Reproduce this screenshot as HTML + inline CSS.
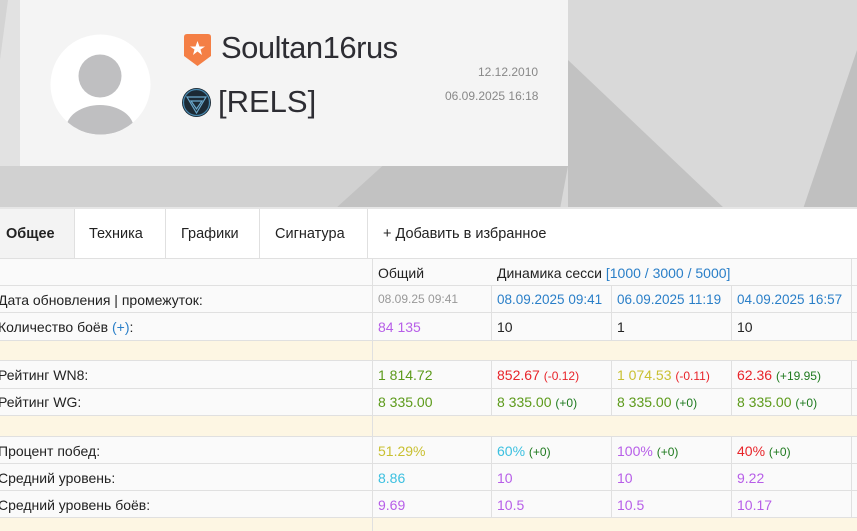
<!DOCTYPE html>
<html><head><meta charset="utf-8"><style>
*{margin:0;padding:0;box-sizing:border-box}
body{width:857px;height:531px;overflow:hidden;font-family:"Liberation Sans",sans-serif;background:#fafafa;position:relative;color:#222}
.a{position:absolute;white-space:nowrap}
.t{font-size:14.5px}
.c{font-size:14px}
.hl{position:absolute;left:0;width:857px;height:1px;background:#e0e0e0}
.vl{position:absolute;width:1px;background:#e0e0e0}
.be{position:absolute;left:0;width:857px;background:#fdf6e3}
.g{color:#5c9a1a}.r{color:#e8242a}.y{color:#c9c032}.p{color:#b75ee8}.b{color:#3cc0e0}.dg{color:#1f7a1f}.bl{color:#2a7fc8}
small{font-size:12px}
</style></head><body>
<svg class="a" style="left:0;top:0" width="857" height="209">
<rect width="857" height="209" fill="#d9d9d9"/>
<polygon points="0,0 20,0 20,166 0,209" fill="#e2e2e2"/>
<polygon points="0,0 8,0 0,60" fill="#d4d4d4"/>
<polygon points="0,166 400,166 335,209 0,209" fill="#d1d1d1"/>
<polygon points="400,150 568,150 568,166 560,209 335,209" fill="#c2c2c2"/>
<polygon points="568,60 725,209 568,209" fill="#c2c2c2"/>
<polygon points="857,50 857,209 803,209" fill="#c0c0c0"/>
<rect x="0" y="207" width="857" height="2" fill="#e6e6e6"/>
</svg>
<div class="a" style="left:20px;top:0;width:548px;height:166px;background:#f4f4f4"></div>
<svg class="a" style="left:50px;top:34px" width="101" height="101"><defs><clipPath id="cc"><circle cx="50.5" cy="50.5" r="50"/></clipPath></defs><circle cx="50.5" cy="50.5" r="50" fill="#fff"/><g clip-path="url(#cc)"><circle cx="50" cy="42" r="21.5" fill="#bfbfc1"/><rect x="17" y="95" width="67" height="10" fill="#bfbfc1"/><ellipse cx="50" cy="95" rx="34" ry="24" fill="#bfbfc1"/></g></svg>
<svg class="a" style="left:184px;top:34px" width="27" height="33"><path d="M3 0H24Q27 0 27 3V22L13.5 32L0 22V3Q0 0 3 0Z" fill="#f47f45"/><polygon points="13.5,7 15.5,12.5 21,12.5 16.5,15.5 18,21 13.5,17.5 9,21 10.5,15.5 6,12.5 11.5,12.5" fill="#fff"/></svg>
<div class="a" style="left:221px;top:30px;font-size:31px;color:#2d2d33;letter-spacing:-0.5px">Soultan16rus</div>
<svg class="a" style="left:181px;top:87px" width="31" height="31"><circle cx="15.5" cy="15.5" r="14.5" fill="#1c2a35"/><circle cx="15.5" cy="15.5" r="13" fill="none" stroke="#4a8ab0" stroke-width="1.2"/><path d="M6 10L25 10L15.5 26Z M10 14L21 14L15.5 22Z" fill="none" stroke="#6aa8cc" stroke-width="1.2"/></svg>
<div class="a" style="left:218px;top:84px;font-size:31px;color:#2d2d33">[RELS]</div>
<div class="a" style="left:478px;top:65px;font-size:12px;color:#888">12.12.2010</div>
<div class="a" style="left:445px;top:89px;font-size:12px;color:#888">06.09.2025 16:18</div>
<div class="a" style="left:0;top:209px;width:857px;height:49px;background:#fff"></div>
<div class="a" style="left:0;top:209px;width:74px;height:49px;background:#f3f3f3"></div>
<div class="vl" style="left:74px;top:209px;height:49px"></div>
<div class="vl" style="left:165px;top:209px;height:49px"></div>
<div class="vl" style="left:259px;top:209px;height:49px"></div>
<div class="vl" style="left:367px;top:209px;height:49px"></div>
<div class="a t" style="left:6px;top:226px;font-weight:bold">Общее</div>
<div class="a t" style="left:89px;top:226px">Техника</div>
<div class="a t" style="left:181px;top:226px">Графики</div>
<div class="a t" style="left:275px;top:226px">Сигнатура</div>
<div class="a t" style="left:383px;top:226px">+ Добавить в избранное</div>
<div class="hl" style="top:258px"></div>
<div class="be" style="top:340px;height:20px"></div>
<div class="be" style="top:415px;height:21px"></div>
<div class="be" style="top:517px;height:14px"></div>
<div class="hl" style="top:285px"></div><div class="hl" style="top:312px"></div><div class="hl" style="top:340px"></div><div class="hl" style="top:360px"></div><div class="hl" style="top:388px"></div><div class="hl" style="top:415px"></div><div class="hl" style="top:436px"></div><div class="hl" style="top:463px"></div><div class="hl" style="top:490px"></div><div class="hl" style="top:517px"></div>
<div class="vl" style="left:372px;top:258px;height:273px"></div>
<div class="vl" style="left:491px;top:285px;height:55px"></div><div class="vl" style="left:611px;top:285px;height:55px"></div><div class="vl" style="left:731px;top:285px;height:55px"></div><div class="vl" style="left:851px;top:258px;height:82px"></div>
<div class="vl" style="left:491px;top:360px;height:55px"></div><div class="vl" style="left:611px;top:360px;height:55px"></div><div class="vl" style="left:731px;top:360px;height:55px"></div><div class="vl" style="left:851px;top:360px;height:55px"></div>
<div class="vl" style="left:491px;top:436px;height:81px"></div><div class="vl" style="left:611px;top:436px;height:81px"></div><div class="vl" style="left:731px;top:436px;height:81px"></div><div class="vl" style="left:851px;top:436px;height:81px"></div>
<div class="a c" style="left:378px;top:265px">Общий</div>
<div class="a c" style="left:497px;top:265px;width:237px;overflow:hidden">Динамика сесси <span class="bl">[1000 / 3000 / 5000]</span></div>
<div class="a c" style="left:-2px;top:292px">Дата обновления | промежуток:</div>
<div class="a" style="left:378px;top:292px;font-size:12px;color:#999">08.09.25 09:41</div>
<div class="a c bl" style="left:497px;top:292px;font-size:13.5px">08.09.2025 09:41</div>
<div class="a c bl" style="left:617px;top:292px;font-size:13.5px">06.09.2025 11:19</div>
<div class="a c bl" style="left:737px;top:292px;font-size:13.5px">04.09.2025 16:57</div>
<div class="a c" style="left:-2px;top:319px">Количество боёв <span class="bl">(+)</span>:</div>
<div class="a c p" style="left:378px;top:319px">84 135</div>
<div class="a c" style="left:497px;top:319px">10</div>
<div class="a c" style="left:617px;top:319px">1</div>
<div class="a c" style="left:737px;top:319px">10</div>
<div class="a c" style="left:-2px;top:367px">Рейтинг WN8:</div>
<div class="a c g" style="left:378px;top:367px">1 814.72</div>
<div class="a c r" style="left:497px;top:367px">852.67 <small>(-0.12)</small></div>
<div class="a c y" style="left:617px;top:367px">1 074.53 <small class="r">(-0.11)</small></div>
<div class="a c r" style="left:737px;top:367px">62.36 <small class="dg">(+19.95)</small></div>
<div class="a c" style="left:-2px;top:394px">Рейтинг WG:</div>
<div class="a c g" style="left:378px;top:394px">8 335.00</div>
<div class="a c g" style="left:497px;top:394px">8 335.00 <small class="dg">(+0)</small></div>
<div class="a c g" style="left:617px;top:394px">8 335.00 <small class="dg">(+0)</small></div>
<div class="a c g" style="left:737px;top:394px">8 335.00 <small class="dg">(+0)</small></div>
<div class="a c" style="left:-2px;top:443px">Процент побед:</div>
<div class="a c y" style="left:378px;top:443px">51.29%</div>
<div class="a c b" style="left:497px;top:443px">60% <small class="dg">(+0)</small></div>
<div class="a c p" style="left:617px;top:443px">100% <small class="dg">(+0)</small></div>
<div class="a c r" style="left:737px;top:443px">40% <small class="dg">(+0)</small></div>
<div class="a c" style="left:-2px;top:470px">Средний уровень:</div>
<div class="a c b" style="left:378px;top:470px">8.86</div>
<div class="a c p" style="left:497px;top:470px">10</div>
<div class="a c p" style="left:617px;top:470px">10</div>
<div class="a c p" style="left:737px;top:470px">9.22</div>
<div class="a c" style="left:-2px;top:497px">Средний уровень боёв:</div>
<div class="a c p" style="left:378px;top:497px">9.69</div>
<div class="a c p" style="left:497px;top:497px">10.5</div>
<div class="a c p" style="left:617px;top:497px">10.5</div>
<div class="a c p" style="left:737px;top:497px">10.17</div>
</body></html>
